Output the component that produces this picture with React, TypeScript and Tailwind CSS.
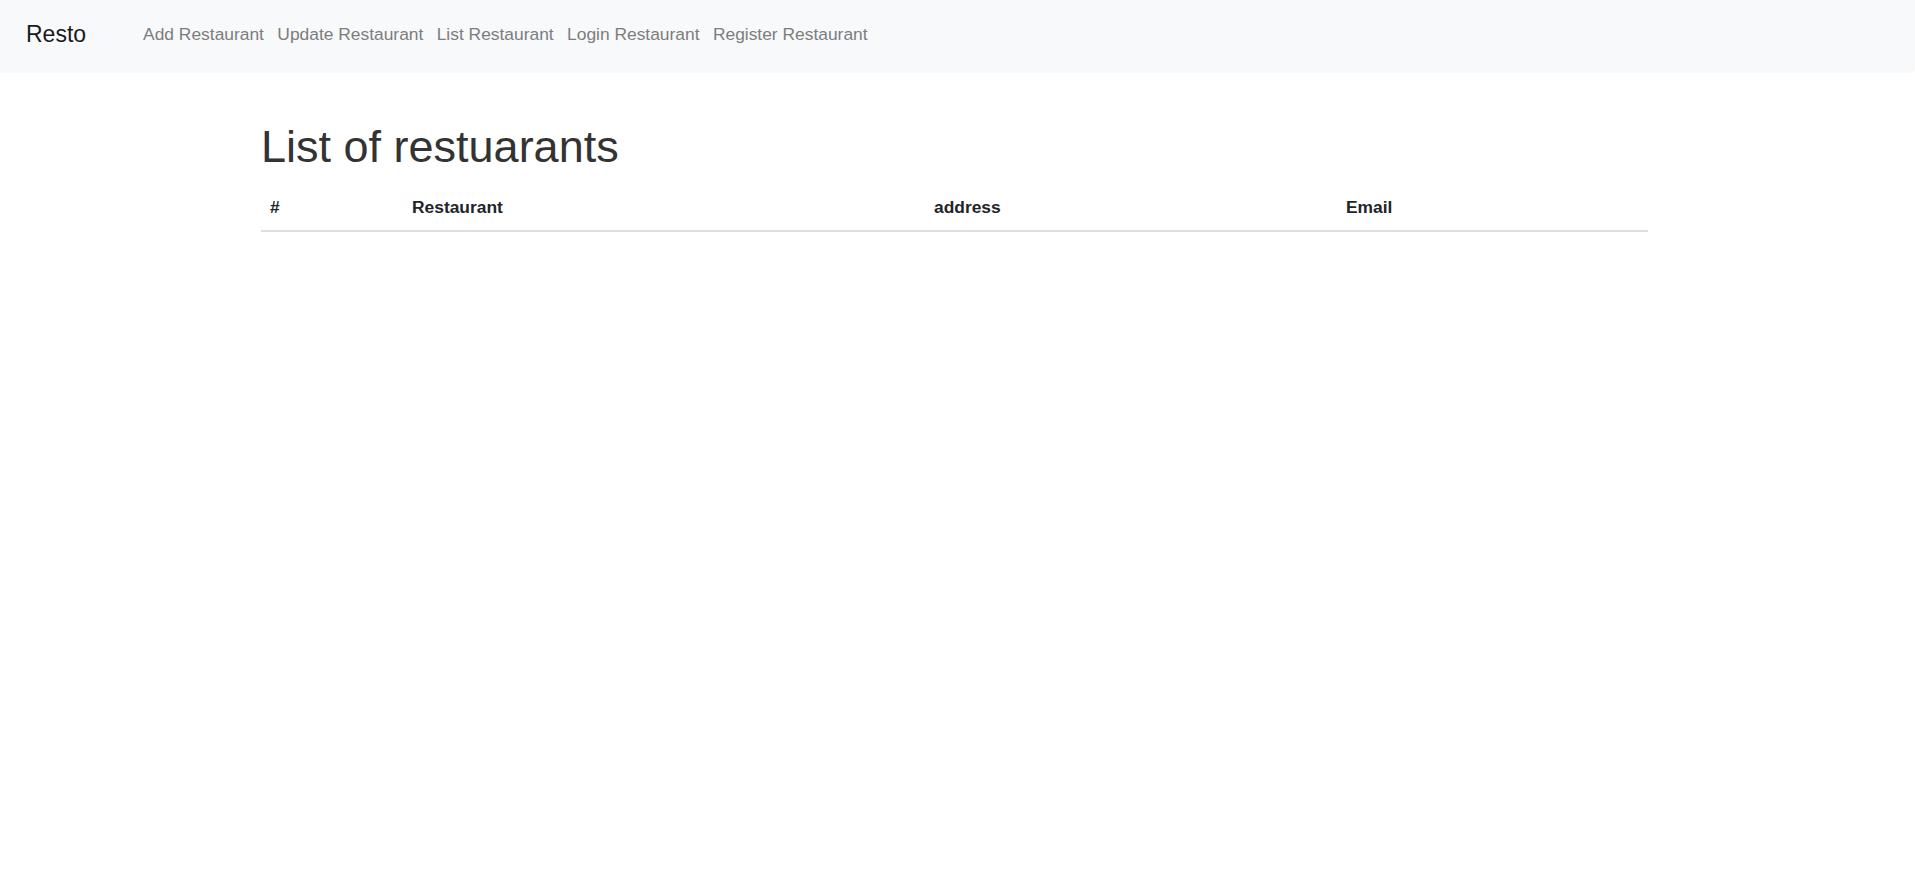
const links = [
  'Add Restaurant',
  'Update Restaurant',
  'List Restaurant',
  'Login Restaurant',
  'Register Restaurant',
];

const columns = [
  { label: '#', width: 'w-[142px]' },
  { label: 'Restaurant', width: 'w-[522px]' },
  { label: 'address', width: 'w-[412px]' },
  { label: 'Email', width: 'w-[311px]' },
];

const NavBar = () => (
  <nav className="flex h-[73px] items-start rounded-br-[5px] bg-[#f8f9fa] pl-[26px]">
    <a href="#" className="mt-[17px] mr-[57px] text-[23px] leading-[34px] text-[#1a1a1a]">
      Resto
    </a>
    <ul className="mt-[21px] flex gap-[13.4px]">
      {links.map((link) => (
        <li key={link}>
          <a href="#" className="text-[17.4px] leading-[26px] text-[#7c7d7e]">
            {link}
          </a>
        </li>
      ))}
    </ul>
  </nav>
);

const RestaurantList = () => (
  <div className="w-[1387px]">
    <h1 className="mt-[47px] text-[45px] leading-[1.2] font-normal text-[#333333]">
      List of restuarants
    </h1>
    <table className="mt-[12px] w-full table-fixed border-collapse">
      <thead>
        <tr className="border-b-2 border-[#dedede]">
          {columns.map((col) => (
            <th
              key={col.label}
              className={`${col.width} px-[9px] py-[9px] text-left text-[17.4px] leading-[25.5px] font-bold text-[#212529]`}
            >
              {col.label}
            </th>
          ))}
        </tr>
      </thead>
      <tbody />
    </table>
  </div>
);

export default function App() {
  return (
    <div className="min-h-screen bg-white font-['Liberation_Sans',Arial,sans-serif]">
      <NavBar />
      <main className="pl-[261px]">
        <RestaurantList />
      </main>
    </div>
  );
}
